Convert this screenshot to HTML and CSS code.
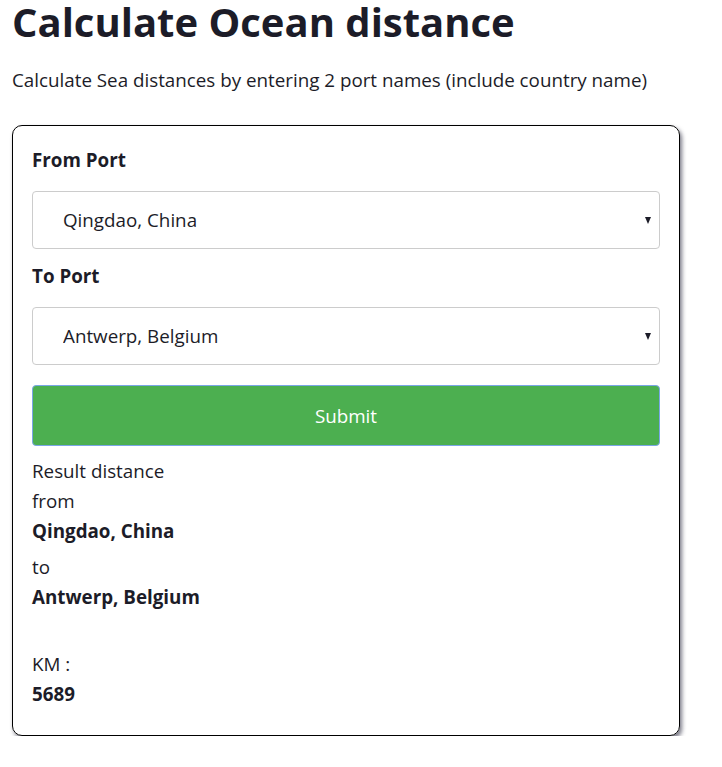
FILE: index.html
```html
<!DOCTYPE html>
<html>
<head>
<meta charset="utf-8">
<link rel="stylesheet" href="styles.css">
</head>
<body>
<h1 class="title">Calculate Ocean distance</h1>
<p class="intro">Calculate Sea distances by entering 2 port names (include country name)</p>
<div class="card">
  <label class="label">From Port</label>
  <div class="select-wrap">
    <select class="select"><option>Qingdao, China</option></select>
  </div>
  <label class="label">To Port</label>
  <div class="select-wrap">
    <select class="select"><option>Antwerp, Belgium</option></select>
  </div>
  <button class="submit">Submit</button>
  <div class="result">
    <div class="line">Result distance</div>
    <div class="line">from</div>
    <div class="line strong">Qingdao, China</div>
    <div class="line gap-small">to</div>
    <div class="line strong">Antwerp, Belgium</div>
    <div class="line gap-large">KM :</div>
    <div class="line strong">5689</div>
  </div>
</div>
</body>
</html>
```
FILE: styles.css
```css
html, body {
  margin: 0;
  padding: 0;
  background: #fff;
}
body {
  font-family: "Open Sans", "Liberation Sans", sans-serif;
  color: #1c1c28;
  padding: 0 12px;
}
.title {
  font-size: 40px;
  font-weight: 700;
  line-height: 44px;
  margin: 0;
}
.intro {
  font-size: 18.8px;
  line-height: 27px;
  margin: 23px 0 0 0;
}
.card {
  margin-top: 31px;
  width: 628px;
  border: 1px solid #000;
  border-radius: 10px;
  box-shadow: 2px 3px 4px rgba(50, 50, 70, 0.65);
  padding: 21px 19px 20px 19px;
  height: 568px;
}
.label {
  display: block;
  font-size: 18.8px;
  font-weight: 700;
  line-height: 27px;
  margin-bottom: 17px;
}
.select-wrap {
  position: relative;
  margin-bottom: 14px;
}
.select-wrap::after {
  content: "";
  position: absolute;
  right: 9px;
  top: 26px;
  border-left: 3.5px solid transparent;
  border-right: 3.5px solid transparent;
  border-top: 7px solid #1c1c28;
}
.select {
  appearance: none;
  -webkit-appearance: none;
  display: block;
  width: 100%;
  height: 58px;
  box-sizing: border-box;
  border: 1px solid #ccc;
  border-radius: 4px;
  background: #fff;
  padding: 0 30px;
  font-family: "Open Sans", "Liberation Sans", sans-serif;
  font-size: 18.8px;
  color: #1c1c28;
}
.submit {
  display: block;
  width: 100%;
  height: 61px;
  margin-top: 20px;
  box-sizing: border-box;
  background: #4caf50;
  border: 1px solid #7aa6e6;
  border-radius: 4px;
  color: #fff;
  font-family: "Open Sans", "Liberation Sans", sans-serif;
  font-size: 18.8px;
}
.result {
  margin-top: 10px;
  font-size: 18.8px;
}
.line {
  line-height: 30px;
}
.strong {
  font-weight: 700;
}
.gap-small {
  margin-top: 6px;
}
.gap-large {
  margin-top: 37px;
}
```
